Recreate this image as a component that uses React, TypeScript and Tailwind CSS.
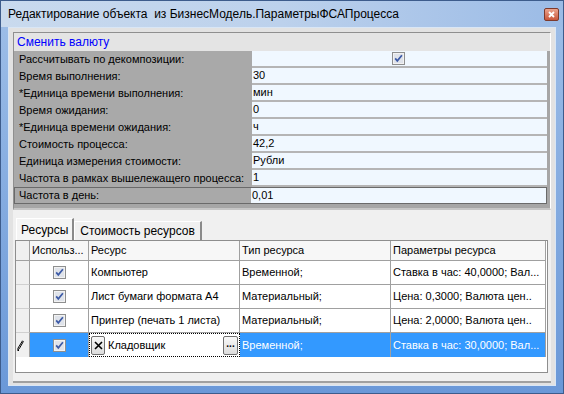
import { Fragment } from 'react';

const props: [string, string | null][] = [
  ['Рассчитывать по декомпозиции:', null],
  ['Время выполнения:', '30'],
  ['*Единица времени выполнения:', 'мин'],
  ['Время ожидания:', '0'],
  ['*Единица времени ожидания:', 'ч'],
  ['Стоимость процесса:', '42,2'],
  ['Единица измерения стоимости:', 'Рубли'],
  ['Частота в рамках вышележащего процесса:', '1'],
  ['Частота в день:', '0,01'],
];

const rows = [
  { name: 'Компьютер', type: 'Временной;', params: 'Ставка в час: 40,0000; Вал...' },
  { name: 'Лист бумаги формата А4', type: 'Материальный;', params: 'Цена: 0,3000; Валюта цен..' },
  { name: 'Принтер (печать 1 листа)', type: 'Материальный;', params: 'Цена: 2,0000; Валюта цен..' },
];

function Check() {
  return (
    <svg width="13" height="13" viewBox="0 0 13 13" className="block">
      <rect x="0.5" y="0.5" width="12" height="12" fill="#f2f2f2" stroke="#8e8f8f" />
      <rect x="2" y="2" width="9" height="9" fill="#dfe3ea" />
      <path d="M3.2 6.4 L5.3 8.9 L9.9 3.3" stroke="#3c5aa6" strokeWidth="1.7" fill="none" />
    </svg>
  );
}

function Pencil() {
  return (
    <svg width="7" height="11" viewBox="0 0 7 11" className="block">
      <path d="M5.5 0.8 L6.3 1.6 L2.2 8.8 L0.8 9.8 L1 8.1 Z" fill="#fff" stroke="#000" strokeWidth="1" />
      <path d="M0.5 10.5 L2 10.5" stroke="#000" strokeWidth="1" />
    </svg>
  );
}

export default function App() {
  return (
    <div className="flex h-[394px] w-[564px] flex-col border border-[#3d5c8c] bg-gradient-to-b from-[#9fbfe8] to-[#6a98d8] font-['Liberation_Sans',Arial,sans-serif] text-black">
      {/* title bar */}
      <div className="flex h-[26px] items-center bg-gradient-to-r from-[#c9daee] via-[#bcd1ec] to-[#9bbbe6] pl-[7px]">
        <span className="text-[12px]">
          Редактирование объекта&nbsp;&nbsp;из БизнесМодель.ПараметрыФСАПроцесса
        </span>
        <div className="ml-auto mr-[4px] flex h-[13px] w-[15px] items-center justify-center rounded-[2px] border border-[#7d3a2c] bg-gradient-to-b from-[#eaa38e] to-[#c8553a]">
          <svg width="7" height="7" viewBox="0 0 7 7">
            <path d="M1 1 L6 6 M6 1 L1 6" stroke="#fff" strokeWidth="1.8" />
          </svg>
        </div>
      </div>

      {/* frame */}
      <div className="flex-1 px-[7px] pb-[7px]">
        <div className="flex h-full flex-col border border-[#d9e6f5] bg-[#e2e2e2] px-[4px] pb-[2px] pt-[4px]">
          {/* top panel */}
          <div className="flex flex-col border-l border-t border-[#8f8f8f] border-b-[2px] border-b-[#c6c6c6] border-r border-r-white">
            <div className="flex h-[18px] items-center bg-[#e4e4e4] pl-[3px] text-[12px] text-[#0000ff]">
              Сменить валюту
            </div>
            <div className="flex flex-col border-b-[4px] border-r-[3px] border-[#a6a6a6] bg-[#a9a9a9] text-[11px]">
              {props.map(([label, value], i) => {
                const last = i === props.length - 1;
                return (
                  <div
                    key={label}
                    className={
                      last
                        ? 'flex h-[17px] border border-[#6a6a6a]'
                        : 'flex h-[17px]'
                    }
                  >
                    <div className={last ? 'flex w-[236px] items-center pl-[4px]' : 'flex w-[238px] items-center pl-[5px]'}>
                      {label}
                    </div>
                    <div
                      className={
                        last
                          ? 'flex flex-1 items-center bg-[#f0f8ff] pl-[1px]'
                          : 'flex flex-1 items-center border-b-2 border-[#b5b5b5] bg-[#f0f8ff] pl-[1px]'
                      }
                    >
                      {value === null ? (
                        <div className="ml-[139px]">
                          <Check />
                        </div>
                      ) : (
                        value
                      )}
                    </div>
                  </div>
                );
              })}
            </div>
          </div>

          {/* lower section */}
          <div className="flex flex-1 flex-col border-b-2 border-[#a0a0a0] bg-[#f0f0f0] pl-[2px] pr-[2px] pt-[8px]">
            <div className="flex h-[22px] items-end pl-[1px] text-[12px]">
              <div className="flex h-[22px] items-center border-l border-t border-white border-r-2 border-r-[#8a8a8a] bg-[#f4f4f4] px-[4px]">
                Ресурсы
              </div>
              <div className="flex h-[19px] items-center border-l border-t border-white border-r-2 border-r-[#8a8a8a] bg-[#f0f0f0] pl-[5px] pr-[5px]">
                Стоимость ресурсов
              </div>
            </div>

            {/* table */}
            <div className="h-[133px] w-[533px] border border-[#8e8e8e] bg-white text-[11px]">
              <div className="grid grid-cols-[14px_59px_151px_151px_155px]">
                <div className="h-[20px] border-b border-r border-[#a0a0a0] bg-[#f0f0f0]" />
                <div className="flex h-[20px] items-center border-b border-r border-[#a0a0a0] bg-[#f7f7f7] pl-[2px]">
                  Использ...
                </div>
                <div className="flex h-[20px] items-center border-b border-r border-[#a0a0a0] bg-[#f7f7f7] pl-[2px]">
                  Ресурс
                </div>
                <div className="flex h-[20px] items-center border-b border-r border-[#a0a0a0] bg-[#f7f7f7] pl-[2px]">
                  Тип ресурса
                </div>
                <div className="flex h-[20px] items-center border-b border-r border-[#a0a0a0] bg-[#f7f7f7] pl-[2px]">
                  Параметры ресурса
                </div>

                {rows.map((r) => (
                  <Fragment key={r.name}>
                    <div className="h-[24px] border-b border-r border-[#d0d0d0] border-r-[#a0a0a0] bg-[#f0f0f0]" />
                    <div className="flex h-[24px] items-center justify-center border-b border-r border-[#a0a0a0]">
                      <Check />
                    </div>
                    <div className="flex h-[24px] items-center border-b border-r border-[#a0a0a0] pl-[2px]">
                      {r.name}
                    </div>
                    <div className="flex h-[24px] items-center border-b border-r border-[#a0a0a0] pl-[2px]">
                      {r.type}
                    </div>
                    <div className="flex h-[24px] items-center border-b border-r border-[#a0a0a0] pl-[2px]">
                      {r.params}
                    </div>
                  </Fragment>
                ))}

                {/* row being edited */}
                <div className="flex h-[24px] items-center border-r border-[#a0a0a0] bg-[#f0f0f0] pl-[1px]">
                  <Pencil />
                </div>
                <div className="flex h-[24px] items-center justify-center border-r border-[#a0a0a0] bg-[#3399ff]">
                  <Check />
                </div>
                <div className="flex h-[24px] items-center gap-[3px] border border-dotted border-black bg-white px-[1px]">
                  <div className="flex h-[19px] w-[14px] items-center justify-center rounded-[2px] border border-[#707070] bg-gradient-to-b from-[#f8f8f8] to-[#dcdcdc]">
                    <svg width="9" height="9" viewBox="0 0 9 9">
                      <path d="M1 1 L8 8 M8 1 L1 8" stroke="#000" strokeWidth="1.6" />
                    </svg>
                  </div>
                  <span className="flex-1">Кладовщик</span>
                  <div className="flex h-[19px] w-[15px] items-center justify-center rounded-[2px] border border-[#707070] bg-gradient-to-b from-[#f8f8f8] to-[#dcdcdc] pb-[3px] text-[10px] font-bold leading-none">
                    ...
                  </div>
                </div>
                <div className="flex h-[24px] items-center border-r border-[#a0a0a0] bg-[#3399ff] pl-[2px] text-white">
                  Временной;
                </div>
                <div className="flex h-[24px] items-center border-r border-[#a0a0a0] bg-[#3399ff] pl-[2px] text-white">
                  Ставка в час: 30,0000; Вал...
                </div>
              </div>
            </div>
          </div>
        </div>
      </div>
    </div>
  );
}
